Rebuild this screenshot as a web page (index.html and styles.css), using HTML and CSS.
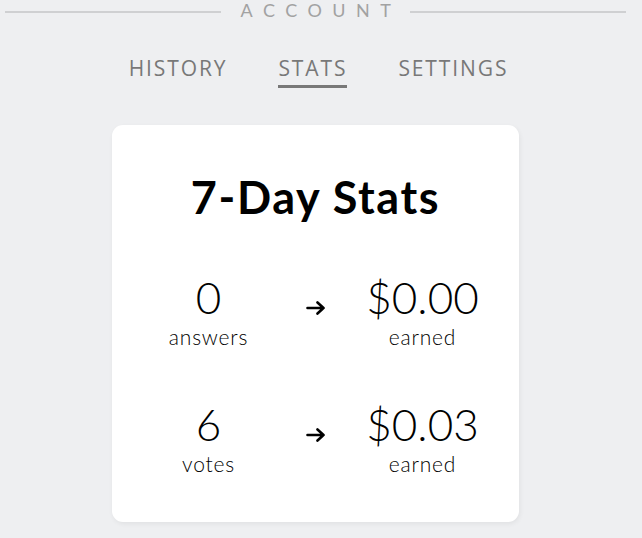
FILE: index.html
```html
<!DOCTYPE html>
<html lang="en">
<head>
<meta charset="utf-8">
<title>Account - Stats</title>
<link rel="stylesheet" href="styles.css">
</head>
<body>
<header class="section-title">
  <span class="rule"></span>
  <h1 class="section-name">ACCOUNT</h1>
  <span class="rule"></span>
</header>
<nav class="tabs">
  <a class="tab">HISTORY</a>
  <a class="tab active">STATS</a>
  <a class="tab">SETTINGS</a>
</nav>
<main class="card">
  <h2 class="card-title">7-Day Stats</h2>
  <div class="stats">
    <div class="stat">
      <div class="num">0</div>
      <div class="label">answers</div>
    </div>
    <div class="arrow"><svg width="20" height="14" viewBox="0 0 20 14"><path d="M1.5 7H17.5M11.5 1.5L17.5 7L11.5 12.5" fill="none" stroke="#000" stroke-width="2.6" stroke-linecap="round" stroke-linejoin="round"/></svg></div>
    <div class="stat">
      <div class="num">$0.00</div>
      <div class="label">earned</div>
    </div>
    <div class="stat">
      <div class="num">6</div>
      <div class="label">votes</div>
    </div>
    <div class="arrow"><svg width="20" height="14" viewBox="0 0 20 14"><path d="M1.5 7H17.5M11.5 1.5L17.5 7L11.5 12.5" fill="none" stroke="#000" stroke-width="2.6" stroke-linecap="round" stroke-linejoin="round"/></svg></div>
    <div class="stat">
      <div class="num">$0.03</div>
      <div class="label">earned</div>
    </div>
  </div>
</main>
</body>
</html>
```
FILE: styles.css
```css
html, body {
  margin: 0;
  padding: 0;
}
body {
  background: #eeeff1;
  font-family: "Lato", "Open Sans", sans-serif;
  color: #000;
  height: 538px;
  overflow: hidden;
  padding-right: 11px;
}
.section-title {
  display: flex;
  align-items: center;
  padding: 0 5px 0 5px;
  height: 22px;
  margin-top: -1px;
}
.rule {
  flex: 1;
  height: 2px;
  background: #cfd0d2;
  margin-top: 4px;
}
.section-name {
  margin: 0 9px 0 20px;
  font-family: "Lato", sans-serif;
  font-weight: 400;
  font-size: 18px;
  letter-spacing: 10.5px;
  color: #a2a2a2;
  line-height: 22px;
}
.tabs {
  display: flex;
  justify-content: center;
  gap: 51px;
  margin-top: 33px;
  padding-left: 6px;
}
.tab {
  font-family: "Open Sans", sans-serif;
  font-weight: 500;
  font-size: 21px;
  letter-spacing: 1.9px;
  color: #787878;
  line-height: 28px;
  padding-bottom: 3px;
  border-bottom: 3px solid transparent;
}
.tab.active {
  border-bottom-color: #787878;
}
.card {
  width: 407px;
  height: 397px;
  box-sizing: border-box;
  margin: 37px auto 0;
  background: #fff;
  border-radius: 11px;
  box-shadow: 1px 2px 5px rgba(0, 0, 0, 0.06);
  padding-top: 45px;
}
.card-title {
  margin: 0;
  text-align: center;
  font-size: 45px;
  font-weight: 700;
  letter-spacing: 1.6px;
  line-height: 1.2;
}
.stats {
  display: grid;
  grid-template-columns: 150px 64px 150px;
  justify-content: center;
  row-gap: 49px;
  margin-top: 47px;
}
.stat {
  text-align: center;
}
.num {
  font-size: 44px;
  font-weight: 300;
  line-height: 1.2;
}
.label {
  font-size: 21px;
  font-weight: 300;
  letter-spacing: 0.8px;
  line-height: 24px;
  margin-top: 1px;
  color: #000;
}
.arrow {
  display: flex;
  justify-content: center;
  padding-top: 30px;
}
```
